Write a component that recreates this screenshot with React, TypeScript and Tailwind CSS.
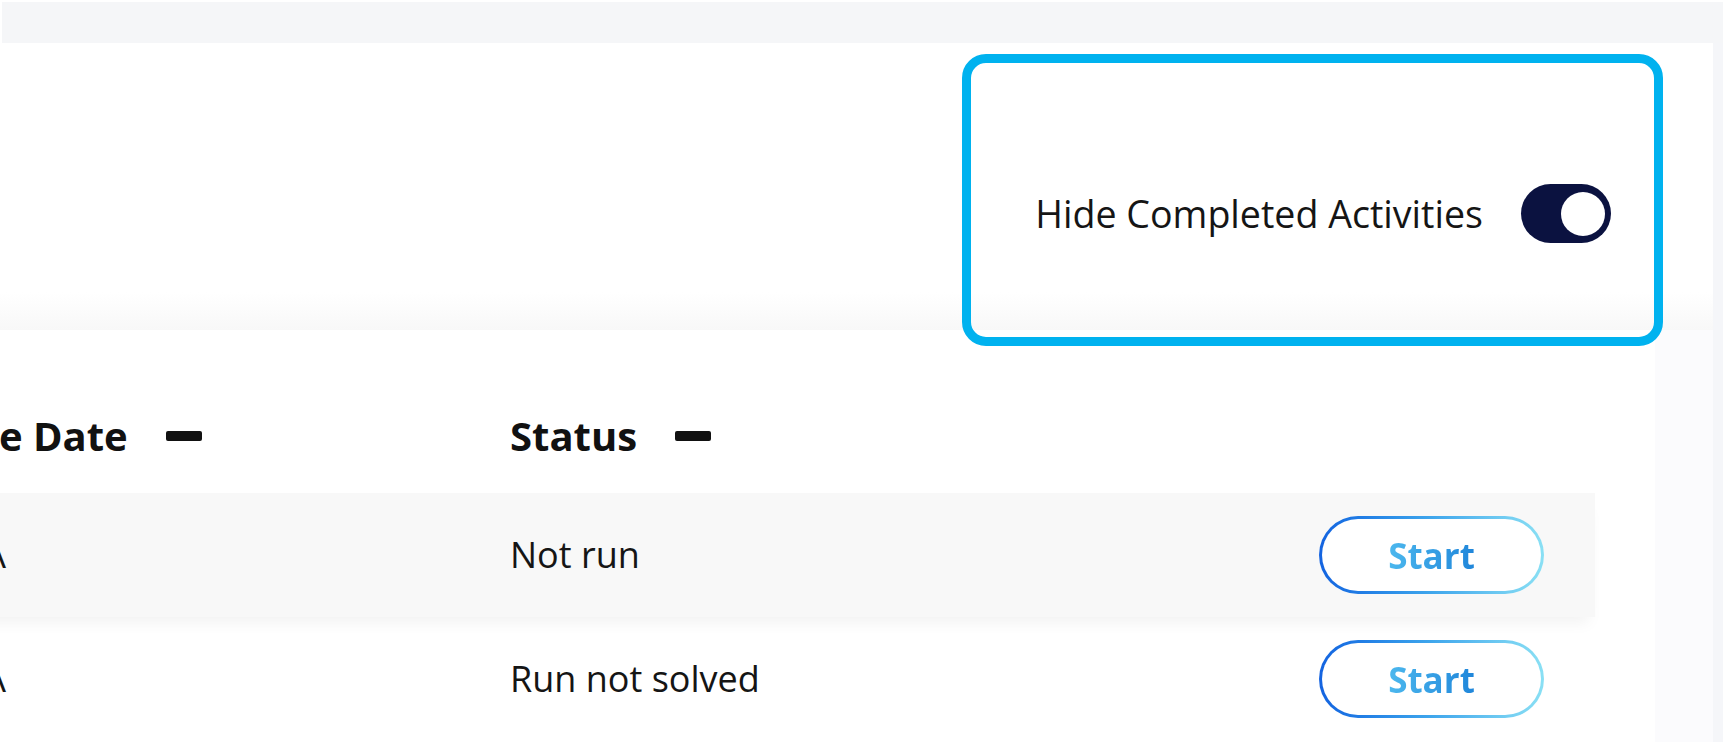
import { useState } from "react";

type Activity = {
  dueDate: string;
  status: string;
};

const activities: Activity[] = [
  { dueDate: "N/A", status: "Not run" },
  { dueDate: "N/A", status: "Run not solved" },
];

function SortDash() {
  return <span className="block h-[10px] w-[36px] rounded-[2px] bg-[#111]" />;
}

function Toggle({ on, onChange }: { on: boolean; onChange: (v: boolean) => void }) {
  return (
    <button
      type="button"
      onClick={() => onChange(!on)}
      className={`relative h-[59px] w-[90px] shrink-0 rounded-full ${on ? "bg-[#0b1240]" : "bg-[#c9ccd6]"}`}
    >
      <span
        className={`absolute top-1/2 h-[44px] w-[44px] -translate-y-1/2 rounded-full bg-white ${on ? "right-[6px]" : "left-[6px]"}`}
      />
    </button>
  );
}

function StartButton() {
  return (
    <div className="shrink-0 rounded-full bg-linear-to-r from-[#1463e0] via-[#3fa6ec] to-[#8ae0f4] p-[3px]">
      <div className="flex h-[72px] w-[219px] items-center justify-center rounded-full bg-white">
        <span className="bg-linear-to-r from-[#4cb8ee] to-[#1f86da] bg-clip-text text-[35px] font-bold leading-none text-transparent">
          Start
        </span>
      </div>
    </div>
  );
}

export default function App() {
  const [hideCompleted, setHideCompleted] = useState(true);

  return (
    <div className="relative h-[742px] w-full overflow-hidden bg-[#f5f6f9] font-['Open_Sans',sans-serif]">
      <div className="h-[43px] border-l-2 border-t-2 border-white bg-[#f5f6f8]" />

      <div className="mr-[10px] flex flex-col">
        {/* filter bar */}
        <div className="flex h-[287px] flex-col bg-white">
          <div className="flex flex-1 items-start justify-end pr-[102px] pt-[141px]">
            <div className="flex items-center gap-[38px]">
              <span className="text-[37.6px] leading-none text-[#151515]">Hide Completed Activities</span>
              <Toggle on={hideCompleted} onChange={setHideCompleted} />
            </div>
          </div>
          <div className="h-[38px] bg-linear-to-b from-white to-[#f8f8f8]" />
        </div>

        {/* activities table */}
        <div className="flex h-[412px]">
          <div className="flex-1 overflow-hidden bg-white pt-[86px]">
            <div className="ml-[-57px] mr-[60px]">
              <div className="flex h-[40px] items-center text-[40px] font-bold leading-none text-[#111]">
                <div className="flex w-[567px] shrink-0 items-center gap-[38px]">
                  <span>Due Date</span>
                  <SortDash />
                </div>
                <div className="flex items-center gap-[38px]">
                  <span>Status</span>
                  <SortDash />
                </div>
              </div>

              <div className="mt-[37px]">
                {activities.map((a, i) => (
                  <div
                    key={i}
                    className={`relative flex h-[124px] items-center pr-[51px] text-[36px] leading-none text-[#151515] ${
                      i % 2 === 0 ? "z-10 bg-[#f8f8f8] shadow-[0_12px_14px_-6px_rgba(0,0,0,0.05)]" : ""
                    }`}
                  >
                    <div className="w-[567px] shrink-0">{a.dueDate}</div>
                    <div className="flex-1">{a.status}</div>
                    <StartButton />
                  </div>
                ))}
              </div>
            </div>
          </div>
          <div className="w-[58px] bg-[#fbfbfd]" />
        </div>
      </div>

      {/* highlight annotation */}
      <div className="pointer-events-none absolute left-[962px] top-[54px] h-[292px] w-[701px] rounded-[24px] border-[9px] border-[#00b2ef]" />
    </div>
  );
}
